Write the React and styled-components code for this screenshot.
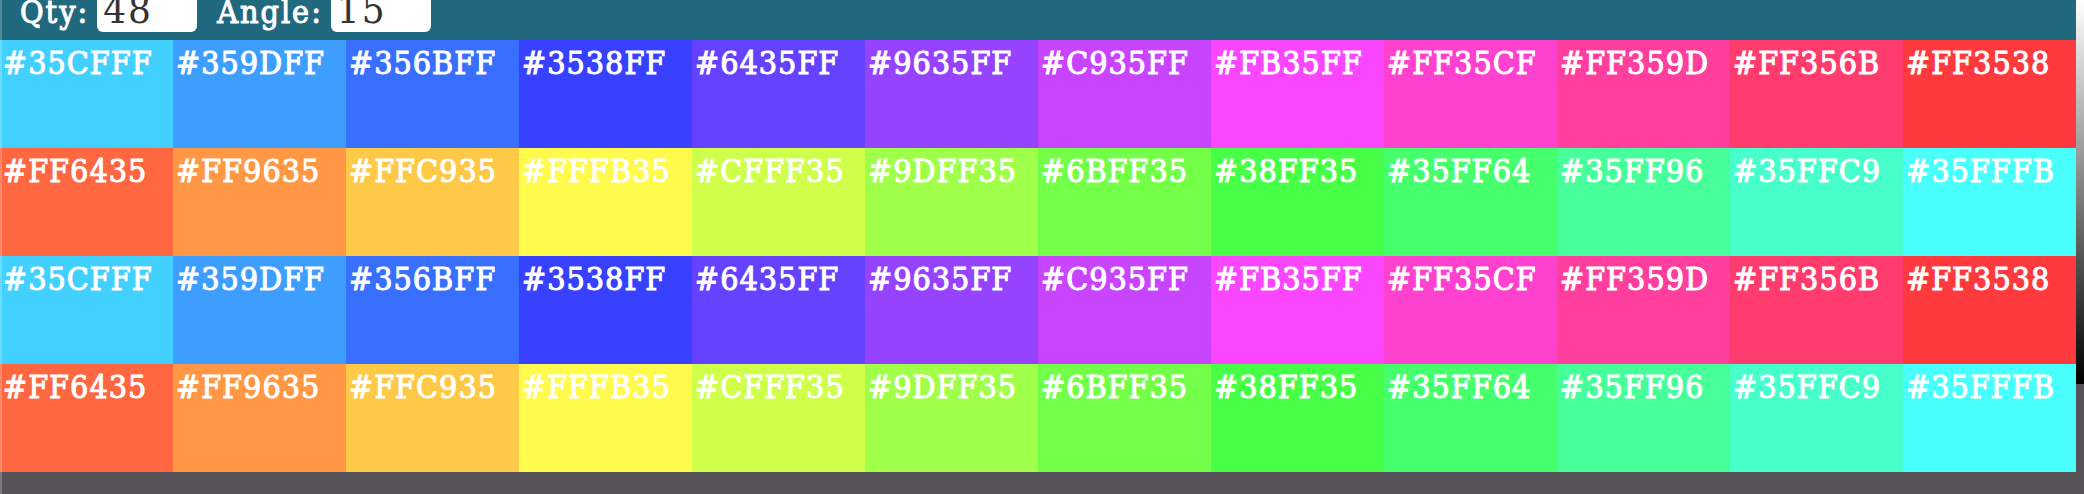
import React, { useState } from "react";
import styled, { createGlobalStyle } from "styled-components";

const GlobalStyle = createGlobalStyle`
  * { box-sizing: border-box; }
  body {
    margin: 0;
    background: #565459;
    color: #fff;
    font-family: "DejaVu Serif Condensed", "DejaVu Serif", serif;
    font-size: 32px;
  }
`;

const Page = styled.div`
  position: relative;
  display: flex;
  align-items: flex-start;
  min-height: 100vh;

  &::before {
    content: "";
    position: absolute;
    top: 0;
    bottom: 0;
    left: 0;
    width: 2px;
    background: rgba(255, 255, 255, 0.22);
  }
`;

const Main = styled.main`
  flex: 1;
  min-width: 0;
`;

const Lightness = styled.aside`
  flex: none;
  width: 8px;
  height: 384px;
  background: linear-gradient(#fff, #000);
`;

const Toolbar = styled.form`
  display: flex;
  align-items: flex-end;
  gap: 20px;
  height: 40px;
  padding: 0 20px 8px;
  overflow: hidden;
  background: #21697f;
`;

const Field = styled.label`
  display: flex;
  align-items: baseline;
  gap: 8px;
  line-height: 40px;
  letter-spacing: 2px;
  -webkit-text-stroke: 1px #fff;
`;

const NumberBox = styled.input`
  width: 100px;
  height: 46px;
  padding: 0 6px;
  border: 0;
  border-radius: 6px;
  background: #fff;
  color: #333;
  font-family: inherit;
  font-size: 40px;
  letter-spacing: 2px;
  -webkit-text-stroke: 0;
`;

const Palette = styled.ul`
  display: grid;
  grid-template-columns: repeat(12, 1fr);
  grid-auto-rows: 108px;
  margin: 0;
  padding: 0;
  list-style: none;
`;

const Swatch = styled.li`
  padding: 4px 3px;
  background: ${({ $fill }) => $fill};
  line-height: 38px;
  letter-spacing: 1px;
  -webkit-text-stroke: 1px #fff;
  white-space: nowrap;
`;

const wheel = [
  ["#35CFFF", "#42d0ff"],
  ["#359DFF", "#3d9eff"],
  ["#356BFF", "#396fff"],
  ["#3538FF", "#3741ff"],
  ["#6435FF", "#6442ff"],
  ["#9635FF", "#9643ff"],
  ["#C935FF", "#c944ff"],
  ["#FB35FF", "#fb46ff"],
  ["#FF35CF", "#ff41cf"],
  ["#FF359D", "#ff3e9d"],
  ["#FF356B", "#ff3c6d"],
  ["#FF3538", "#ff3a3e"],
  ["#FF6435", "#ff6740"],
  ["#FF9635", "#ff9744"],
  ["#FFC935", "#ffc948"],
  ["#FFFB35", "#fffa4c"],
  ["#CFFF35", "#cfff4b"],
  ["#9DFF35", "#a0ff49"],
  ["#6BFF35", "#73ff48"],
  ["#38FF35", "#48ff47"],
  ["#35FF64", "#46ff6c"],
  ["#35FF96", "#46ff9a"],
  ["#35FFC9", "#47ffcb"],
  ["#35FFFB", "#48fffb"],
];

function NumberField({ label, initial }) {
  const [value, setValue] = useState(initial);
  return (
    <Field>
      {label}
      <NumberBox
        inputMode="numeric"
        value={value}
        onChange={(e) => setValue(e.target.value)}
      />
    </Field>
  );
}

export default function App() {
  return (
    <>
      <GlobalStyle />
      <Page>
        <Main>
          <Toolbar>
            <NumberField label="Qty:" initial="48" />
            <NumberField label="Angle:" initial="15" />
          </Toolbar>
          <Palette>
            {[...wheel, ...wheel].map(([name, fill], i) => (
              <Swatch key={i} $fill={fill}>
                {name}
              </Swatch>
            ))}
          </Palette>
        </Main>
        <Lightness />
      </Page>
    </>
  );
}
